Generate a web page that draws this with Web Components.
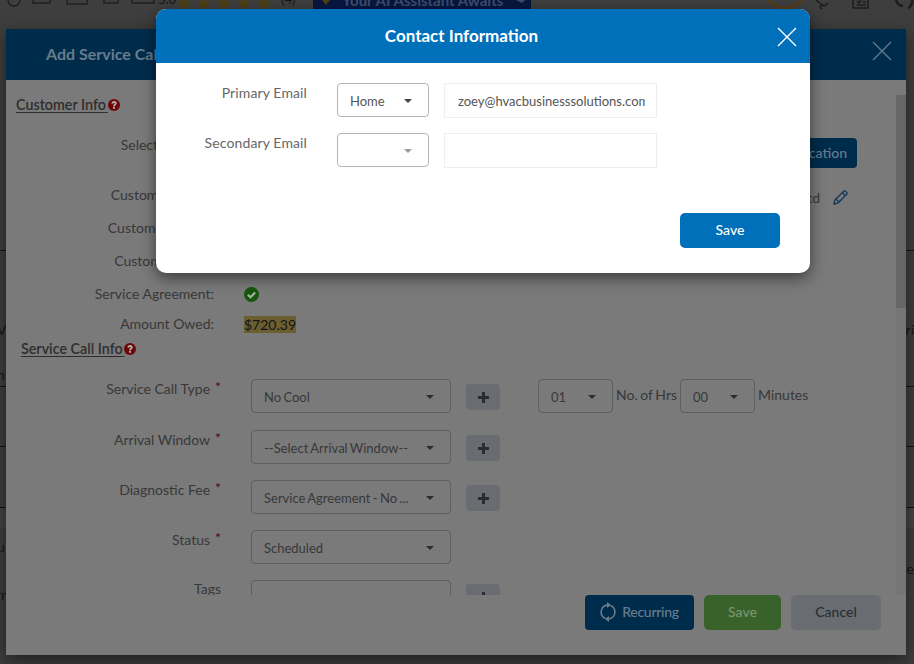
<!DOCTYPE html>
<html lang="en">
<head>
<meta charset="utf-8">
<title>Add Service Call</title>
<style>
  html, body { margin: 0; padding: 0; width: 914px; height: 664px; overflow: hidden; background: #3e3e3e; }
  body { position: relative; font-family: Lato, "Liberation Sans", sans-serif; font-size: 14px; }
</style>
</head>
<body>
<bg-page></bg-page>

<service-modal heading="Add Service Call">
  <section-title>Customer Info</section-title>
  <info-row label="Select Address:" top="23" height="30" align="top">
    <app-button slot="end" kind="primary" style="margin-right:39px">Add Location</app-button>
  </info-row>
  <info-row label="Customer Name:" top="10" height="33">
    <span slot="end" style="margin:5px 13px 0 0">Acme Ltd</span>
    <edit-icon slot="end" style="margin:5px 48px 0 0"></edit-icon>
  </info-row>
  <info-row label="Customer Phone:" height="33"></info-row>
  <info-row label="Customer Email:" height="33"></info-row>
  <info-row label="Service Agreement:" height="33"><check-icon></check-icon></info-row>
  <info-row label="Amount Owed:" height="28"><mark-value>$720.39</mark-value></info-row>
  <section-title style="margin:1px 0 20px 15px">Service Call Info</section-title>

  <form-row label="Service Call Type" required>
    <select-box value="No Cool"></select-box>
    <add-button></add-button>
    <select-box value="01" style="width:75px;margin-left:38px"></select-box>
    <span style="margin:0 3px;line-height:32px;word-spacing:-1px">No. of Hrs</span>
    <select-box value="00" style="width:75px"></select-box>
    <span style="margin:0 3px;line-height:32px">Minutes</span>
  </form-row>
  <form-row label="Arrival Window" required top="17">
    <select-box value="--Select Arrival Window--"></select-box>
    <add-button></add-button>
  </form-row>
  <form-row label="Diagnostic Fee" required top="16">
    <select-box value="Service Agreement - No ..."></select-box>
    <add-button></add-button>
  </form-row>
  <form-row label="Status" required top="16">
    <select-box value="Scheduled"></select-box>
  </form-row>
  <form-row label="Tags" top="15">
    <select-box style="margin-top:1px"></select-box>
    <add-button></add-button>
  </form-row>

  <app-button slot="footer" kind="primary" icon="sync">Recurring</app-button>
  <app-button slot="footer" kind="success">Save</app-button>
  <app-button slot="footer" kind="muted">Cancel</app-button>
</service-modal>

<contact-modal></contact-modal>

<script>
// small icons first, the modals use them

class CloseIcon extends HTMLElement {
  constructor() {
    super();
    this.attachShadow({ mode: 'open' });
  }
  connectedCallback() {
    const color = this.getAttribute('color') || '#fff';
    this.shadowRoot.innerHTML = `
      <style>:host { display: block; width: 20px; height: 20px; } svg { display: block; }</style>
      <svg width="20" height="20" viewBox="0 0 20 20" fill="none" stroke="${color}" stroke-width="1.4">
        <path d="M1 1 L19 19 M19 1 L1 19"/>
      </svg>`;
  }
}
customElements.define('close-icon', CloseIcon);

class HelpIcon extends HTMLElement {
  constructor() {
    super();
    this.attachShadow({ mode: 'open' });
  }
  connectedCallback() {
    this.shadowRoot.innerHTML = `
      <style>:host { display: inline-block; width: 12px; height: 12px; vertical-align: -1px; } svg { display: block; }</style>
      <svg width="12" height="12" viewBox="0 0 12 12">
        <circle cx="6" cy="6" r="6" fill="#6e0808"/>
        <path d="M3.4 4.5 C3.5 2.9 4.6 2 6.1 2 C7.6 2 8.7 3 8.7 4.2 C8.7 5.7 7 5.8 7 7.2 L5.1 7.2 C5.1 5.2 6.8 5.2 6.8 4.4 C6.8 4 6.5 3.7 6 3.7 C5.5 3.7 5.2 4.1 5.1 4.7 Z" fill="#b5b5b5"/>
        <rect x="5.1" y="7.9" width="1.9" height="1.8" fill="#b5b5b5"/>
      </svg>`;
  }
}
customElements.define('help-icon', HelpIcon);

class CheckIcon extends HTMLElement {
  constructor() {
    super();
    this.attachShadow({ mode: 'open' });
  }
  connectedCallback() {
    this.shadowRoot.innerHTML = `
      <style>:host { display: block; width: 15px; height: 15px; margin-top: 1px; } svg { display: block; }</style>
      <svg width="15" height="15" viewBox="0 0 15 15">
        <circle cx="7.5" cy="7.5" r="7.5" fill="#185610"/>
        <path d="M3.8 7.8 L6.4 10.3 L11.2 5.4" fill="none" stroke="#a5b0a2" stroke-width="2.2"/>
      </svg>`;
  }
}
customElements.define('check-icon', CheckIcon);

class EditIcon extends HTMLElement {
  constructor() {
    super();
    this.attachShadow({ mode: 'open' });
  }
  connectedCallback() {
    this.shadowRoot.innerHTML = `
      <style>:host { display: block; width: 15px; height: 15px; } svg { display: block; }</style>
      <svg width="15" height="15" viewBox="0 0 15 15" fill="none" stroke="#0e3554" stroke-width="1.3" stroke-linejoin="round">
        <path d="M1 14 L1.8 10.2 L10.6 1.4 C11.2 .8 12 .8 12.6 1.4 L13.6 2.4 C14.2 3 14.2 3.8 13.6 4.4 L4.8 13.2 Z"/>
        <path d="M9.4 2.8 L12.2 5.6 M3.2 9.2 L5.8 11.8"/>
      </svg>`;
  }
}
customElements.define('edit-icon', EditIcon);

class SelectBox extends HTMLElement {
  constructor() {
    super();
    this.attachShadow({ mode: 'open' });
  }
  connectedCallback() {
    const value = this.getAttribute('value') || '';
    const border = this.getAttribute('border') || '#5e5e5e';
    const caret = this.getAttribute('caret') || '#2c2c2c';
    this.shadowRoot.innerHTML = `
      <style>
        :host {
          display: block;
          width: 200px;
          height: 34px;
          flex: none;
          box-sizing: border-box;
          border: 1px solid ${border};
          border-radius: 4px;
          color: inherit;
          font-size: 13px;
        }
        .inner {
          display: flex;
          align-items: center;
          height: 100%;
          padding: 1px 16px 0 12px;
          box-sizing: border-box;
          gap: 8px;
        }
        .value {
          flex: 1;
          min-width: 0;
          white-space: nowrap;
          overflow: hidden;
          word-spacing: -1px;
        }
        .caret {
          flex: none;
          width: 0;
          height: 0;
          border-left: 4px solid transparent;
          border-right: 4px solid transparent;
          border-top: 4px solid ${caret};
        }
      </style>
      <div class="inner">
        <span class="value">${value}</span>
        <span class="caret"></span>
      </div>`;
  }
}
customElements.define('select-box', SelectBox);

class AddButton extends HTMLElement {
  constructor() {
    super();
    this.attachShadow({ mode: 'open' });
  }
  connectedCallback() {
    this.shadowRoot.innerHTML = `
      <style>
        :host {
          display: flex;
          align-items: center;
          justify-content: center;
          flex: none;
          width: 34px;
          height: 26px;
          margin: 5px 0 0 15px;
          border-radius: 4px;
          background: #696d72;
        }
        svg { display: block; }
      </style>
      <svg width="11" height="11" viewBox="0 0 11 11" fill="#2a2e34">
        <path d="M4 0 H7 V4 H11 V7 H7 V11 H4 V7 H0 V4 H4 Z"/>
      </svg>`;
  }
}
customElements.define('add-button', AddButton);

class AppButton extends HTMLElement {
  constructor() {
    super();
    this.attachShadow({ mode: 'open' });
  }
  connectedCallback() {
    const sync = this.getAttribute('icon') === 'sync' ? `
      <svg width="18" height="20" viewBox="0 0 18 20" fill="none">
        <path d="M8 3.1 A7 7 0 0 0 6.5 16.5 M10 16.9 A7 7 0 0 0 11.5 3.5" stroke="currentColor" stroke-width="1.6"/>
        <path d="M8 0 L12 3 L8 6 Z M10 14 L6 17 L10 20 Z" fill="currentColor"/>
      </svg>` : '';
    this.shadowRoot.innerHTML = `
      <style>
        :host {
          display: inline-flex;
          align-items: center;
          justify-content: center;
          gap: 5px;
          box-sizing: border-box;
          height: 35px;
          padding-bottom: 2px;
          flex: none;
          border-radius: 5px;
          font-weight: 500;
        }
        :host([kind="primary"]) { background: #002c4c; color: #687c8c; height: 30px; padding: 0 10px 1px; border-radius: 4px; }
        :host([kind="primary"][icon]) { height: 35px; width: 109px; padding: 0 1px 2px 0; letter-spacing: -0.3px; }
        :host([kind="success"]) { background: #38622a; color: #7b9672; width: 77px; }
        :host([kind="muted"]) { background: #696d72; color: #2a2e34; width: 90px; }
        :host([kind="solid"]) { background: #0070bb; color: #fff; width: 100px; }
        svg { display: block; }
      </style>
      ${sync}<slot></slot>`;
  }
}
customElements.define('app-button', AppButton);

class SectionTitle extends HTMLElement {
  constructor() {
    super();
    this.attachShadow({ mode: 'open' });
  }
  connectedCallback() {
    this.shadowRoot.innerHTML = `
      <style>
        :host {
          display: block;
          height: 20px;
          line-height: 20px;
          margin-left: 10px;
          font-size: 14.3px;
          font-weight: 600;
          color: #2e2e2e;
        }
        u { text-underline-offset: 2px; }
      </style>
      <u><slot></slot>&#8201;</u><help-icon></help-icon>`;
  }
}
customElements.define('section-title', SectionTitle);

class MarkValue extends HTMLElement {
  constructor() {
    super();
    this.attachShadow({ mode: 'open' });
  }
  connectedCallback() {
    this.shadowRoot.innerHTML = `
      <style>
        :host {
          display: block;
          height: 17px;
          line-height: 17px;
          background: #6b5e30;
          color: #141414;
        }
      </style>
      <slot></slot>`;
  }
}
customElements.define('mark-value', MarkValue);

// label + value rows of the customer block
class InfoRow extends HTMLElement {
  constructor() {
    super();
    this.attachShadow({ mode: 'open' });
  }
  connectedCallback() {
    const label = this.getAttribute('label') || '';
    const top = this.getAttribute('top') || 0;
    const height = this.getAttribute('height') || 33;
    const alignTop = this.getAttribute('align') === 'top';
    this.shadowRoot.innerHTML = `
      <style>
        :host {
          display: flex;
          align-items: ${alignTop ? 'flex-start' : 'center'};
          height: ${height}px;
          margin-top: ${top}px;
        }
        .label {
          flex: none;
          width: 208px;
          text-align: right;
          white-space: nowrap;
          line-height: 14px;
          color: #383838;
        }
        .value { margin-left: 30px; display: flex; align-items: center; }
        .end { margin-left: auto; display: flex; align-items: center; height: 30px; color: #383838; }
      </style>
      <div class="label">${label}</div>
      <div class="value"><slot></slot></div>
      <div class="end"><slot name="end"></slot></div>`;
  }
}
customElements.define('info-row', InfoRow);

// label + controls rows of the service call block
class FormRow extends HTMLElement {
  constructor() {
    super();
    this.attachShadow({ mode: 'open' });
  }
  connectedCallback() {
    const label = this.getAttribute('label') || '';
    const star = this.hasAttribute('required') ? '<span class="star">*</span>' : '';
    this.shadowRoot.innerHTML = `
      <style>
        :host {
          display: flex;
          align-items: flex-start;
          margin-top: ${this.getAttribute('top') || 0}px;
          color: #383838;
        }
        .label {
          flex: none;
          width: 215px;
          margin-right: 30px;
          text-align: right;
          line-height: 20px;
          white-space: nowrap;
        }
        .star {
          display: inline-block;
          position: relative;
          top: -2px;
          margin-left: 5px;
          color: #55080d;
        }
      </style>
      <div class="label">${label}${star}</div>
      <slot></slot>`;
  }
}
customElements.define('form-row', FormRow);

class ServiceModal extends HTMLElement {
  constructor() {
    super();
    this.attachShadow({ mode: 'open' });
  }
  connectedCallback() {
    const heading = this.getAttribute('heading') || '';
    this.shadowRoot.innerHTML = `
      <style>
        :host {
          position: absolute;
          left: 6px;
          top: 29px;
          width: 900px;
          height: 626px;
          display: flex;
          flex-direction: column;
          background: #7a7a7a;
          box-shadow: 0 5px 15px rgba(0, 0, 0, 0.5);
        }
        .header {
          flex: none;
          height: 51px;
          display: flex;
          align-items: center;
          justify-content: space-between;
          padding: 0 14px 2px 40px;
          box-sizing: border-box;
          background: #002c4c;
          color: #687c8c;
          font-size: 16px;
          font-weight: 700;
        }
        close-icon { margin-top: -5px; }
        .middle {
          flex: 1;
          min-height: 0;
          display: flex;
          padding-top: 15px;
        }
        .content {
          flex: 1;
          min-width: 0;
          overflow: hidden;
        }
        .track {
          flex: none;
          width: 10px;
          background: #757575;
        }
        .thumb {
          height: 213px;
          background: #666;
        }
        .footer {
          flex: none;
          height: 60px;
          display: flex;
          justify-content: flex-end;
          align-items: flex-start;
          gap: 10px;
          padding-right: 25px;
        }
      </style>
      <div class="header">
        <span>${heading}</span>
        <close-icon color="#647a8a"></close-icon>
      </div>
      <div class="middle">
        <div class="content"><slot></slot></div>
        <div class="track"><div class="thumb"></div></div>
      </div>
      <div class="footer"><slot name="footer"></slot></div>`;
  }
}
customElements.define('service-modal', ServiceModal);

class ContactModal extends HTMLElement {
  constructor() {
    super();
    this.attachShadow({ mode: 'open' });
  }
  connectedCallback() {
    this.shadowRoot.innerHTML = `
      <style>
        :host {
          position: absolute;
          left: 156px;
          top: 9px;
          width: 654px;
          height: 264px;
          display: block;
          background: #fff;
          border-radius: 10px;
          color: #555;
          box-shadow: 0 5px 15px rgba(0, 0, 0, 0.5);
        }
        .header {
          height: 54px;
          box-sizing: border-box;
          display: flex;
          align-items: center;
          justify-content: center;
          position: relative;
          padding: 0 43px 2px 0;
          border-radius: 10px 10px 0 0;
          background: #0070bb;
          color: #fff;
          font-size: 17px;
          font-weight: 700;
        }
        close-icon {
          position: absolute;
          right: 13px;
          top: 18px;
        }
        .body { padding: 20px 30px 0 0; }
        .row {
          display: flex;
          align-items: flex-start;
          height: 34px;
          margin-bottom: 16px;
        }
        .label {
          flex: none;
          width: 151px;
          margin-right: 30px;
          text-align: right;
          line-height: 20px;
          letter-spacing: 0.12px;
          color: #666;
        }
        .field {
          flex: none;
          box-sizing: border-box;
          width: 213px;
          height: 35px;
          margin-left: 15px;
          padding: 0 13px;
          border: 1px solid #eee;
          font-size: 13px;
          line-height: 34px;
          white-space: nowrap;
          overflow: hidden;
          color: #555;
        }
        .clip { width: 187px; overflow: hidden; }
        .actions {
          display: flex;
          justify-content: flex-end;
          margin-top: 46px;
        }
      </style>
      <div class="header">
        Contact Information
        <close-icon></close-icon>
      </div>
      <div class="body">
        <div class="row">
          <div class="label">Primary Email</div>
          <select-box value="Home" border="#b5b5b5" caret="#444" style="width:92px"></select-box>
          <div class="field"><div class="clip">zoey@hvacbusinesssolutions.com</div></div>
        </div>
        <div class="row">
          <div class="label">Secondary Email</div>
          <select-box border="#b5b5b5" caret="#999" style="width:92px"></select-box>
          <div class="field"></div>
        </div>
        <div class="actions"><app-button kind="solid">Save</app-button></div>
      </div>`;
  }
}
customElements.define('contact-modal', ContactModal);

// what shows of the page under the two modals
class BgPage extends HTMLElement {
  constructor() {
    super();
    this.attachShadow({ mode: 'open' });
  }
  connectedCallback() {
    const star = '<path d="M6 -4 L8 1 L13 1.4 L9.2 4.6 L10.4 9 L6 6.6 L1.6 9 L2.8 4.6 L-1 1.4 L4 1 Z" fill="#4e3e14"/>';
    const stars = [0, 1, 2, 3, 4].map(i => `<g transform="translate(${i * 20} 0)">${star}</g>`).join('');
    this.shadowRoot.innerHTML = `
      <style>
        :host {
          display: block;
          width: 914px;
          height: 664px;
          overflow: hidden;
          background: #3e3e3e;
          color: #161616;
        }
        .strip {
          display: flex;
          height: 9px;
          overflow: hidden;
        }
        svg { display: block; flex: none; }
        .rate { margin: -9px 0 0 3px; font-size: 13px; line-height: 16px; width: 20px; flex: none; }
        .banner {
          flex: none;
          position: relative;
          width: 218px;
          height: 9px;
          margin-left: 10px;
          background: #081640;
          color: #3c4c6c;
          font-size: 15px;
          font-weight: 700;
          line-height: 9px;
          text-indent: 29px;
          white-space: nowrap;
          overflow: hidden;
        }
        .banner span { display: block; margin-top: -4px; }
        .banner svg { position: absolute; top: 0; left: 0; }
        .row {
          display: flex;
          justify-content: space-between;
          box-sizing: border-box;
          white-space: nowrap;
        }
        .line { border-bottom: 1px solid #141414; }
        .left { margin-left: -3px; }
        .band { height: 20px; background: #444; }
      </style>
      <div class="strip">
        <svg width="155" height="9" fill="none" stroke="#1d1d1d" stroke-width="1.3">
          <circle cx="14" cy="0" r="6"/>
          <rect x="33" y="-8" width="17" height="11"/>
          <rect x="67" y="-8" width="20" height="12"/>
          <rect x="104" y="-8" width="14" height="11"/>
          <rect x="132" y="-8" width="22" height="11"/>
        </svg>
        <span class="rate">5.0</span>
        <svg width="100" height="9">${stars}</svg>
        <span class="rate" style="margin-right:2px">(4)</span>
        <div class="banner">
          <span>Your AI Assistant Awaits</span>
          <svg width="218" height="9">
            <path d="M9 0 L17 0 L13 5 Z" fill="#4e3e14"/>
            <path d="M203 0 L212 0 L209 3 Z" fill="#3c4c6c"/>
          </svg>
        </div>
        <svg width="383" height="9" fill="none" stroke-width="1.5">
          <circle cx="254" cy="-12" r="20" stroke="#5a3a14" stroke-width="2.5"/>
          <path d="M285 0 L293 6 L297 3 M293 6 A2 2 0 1 0 292 9" stroke="#1d1d1d"/>
          <rect x="322" y="-6" width="15" height="14" stroke="#1d1d1d"/>
          <path d="M326 1 L328 3 L330 0 M332 2 H335 M326 5 H335" stroke="#1d1d1d"/>
          <path d="M365 0 A8 8 0 0 0 372 6 M381 0 A8 8 0 0 1 377 8" stroke="#1d1d1d" stroke-width="2.5"/>
        </svg>
      </div>
      <div class="row line" style="height:242px"></div>
      <div class="row" style="height:86px;padding-top:70px"><span class="left">V</span><span>ri</span></div>
      <div class="row line" style="height:50px;padding-top:29px"><span class="left">n</span></div>
      <div class="row line" style="height:60px"></div>
      <div class="row line" style="height:61px"></div>
      <div class="band"></div>
      <div class="row" style="height:27px;padding-top:10px"><span class="left">u</span></div>
      <div class="row" style="height:26px;padding-top:5px"><span class="left">i</span><span>le</span></div>
      <div class="row" style="height:26px;padding-top:5px"><span class="left">m</span></div>`;
  }
}
customElements.define('bg-page', BgPage);
</script>
</body>
</html>
